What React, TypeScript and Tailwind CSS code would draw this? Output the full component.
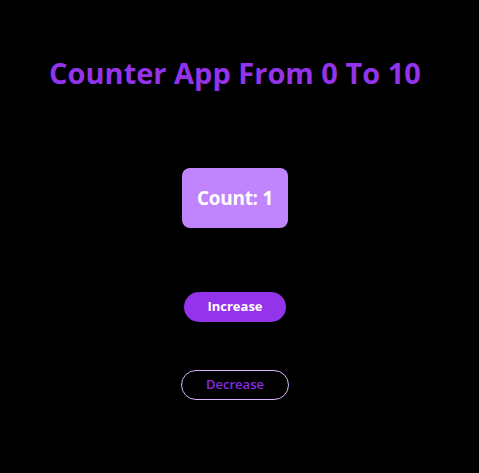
import { useState } from 'react';

export default function App() {
  const [count, setCount] = useState(1);

  return (
    <div className="min-h-screen bg-black" style={{ fontFamily: '"Open Sans", "Noto Sans", sans-serif' }}>
      <div className="w-[470px] flex flex-col items-center">
        <h1 className="mt-[54px] text-[29px] leading-[38px] font-bold text-[#9333ea]">Counter App From 0 To 10</h1>
        <div className="mt-[76px] w-[106px] h-[60px] rounded-lg bg-[#c084fc] flex items-center justify-center text-white font-bold text-[19px] tracking-[-0.3px]">
          Count: {count}
        </div>
        <button
          onClick={() => setCount(c => Math.min(10, c + 1))}
          className="mt-[64px] w-[102px] h-[30px] rounded-full bg-[#9333ea] text-white font-bold text-[13px]"
        >
          Increase
        </button>
        <button
          onClick={() => setCount(c => Math.max(0, c - 1))}
          className="mt-[48px] w-[108px] h-[30px] rounded-full border border-[#d8b4fe] text-[#8a2be2] font-semibold text-[13px]"
        >
          Decrease
        </button>
      </div>
    </div>
  );
}
